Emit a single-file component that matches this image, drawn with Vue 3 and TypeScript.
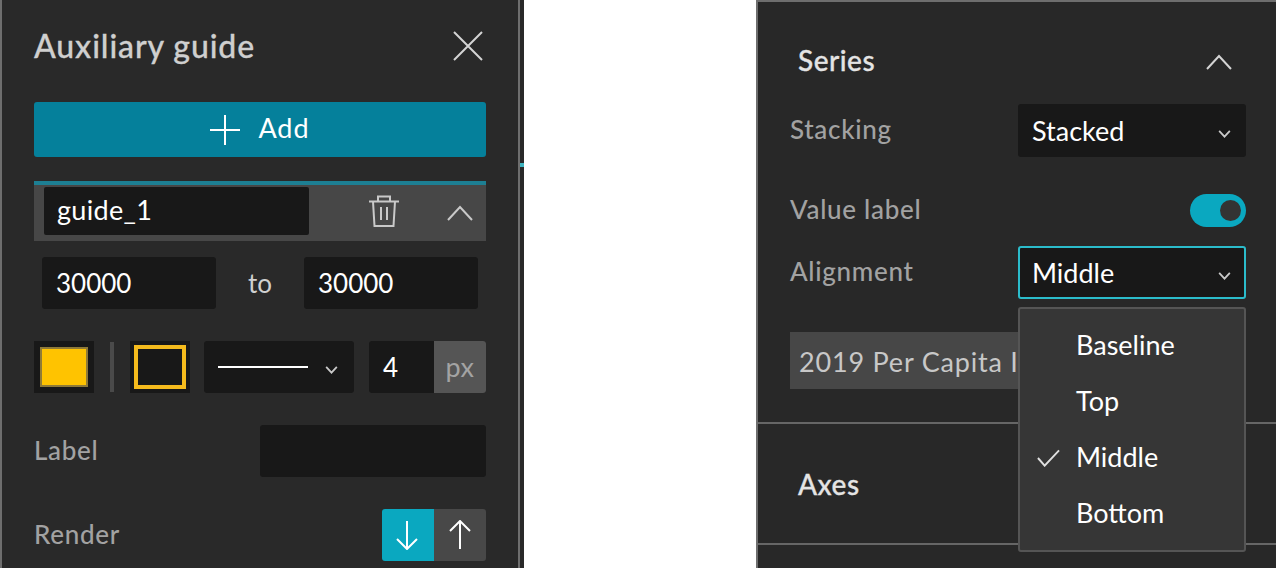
<script setup lang="ts">
const alignOptions = ['Baseline', 'Top', 'Middle', 'Bottom'];
const selected = 'Middle';
</script>

<template>
    <div class="page">
        <section class="guide-panel">
            <header class="guide-head">
                <h2>Auxiliary guide</h2>
                <svg class="close" viewBox="0 0 30 30" width="30" height="30">
                    <path d="M1 1L29 29M29 1L1 29" />
                </svg>
            </header>

            <button class="add-btn">
                <svg viewBox="0 0 30 30" width="30" height="30">
                    <path d="M15 0V30M0 15H30" />
                </svg>
                <span>Add</span>
            </button>

            <div class="guide-row">
                <div class="name-input">guide_1</div>
                <svg class="trash" viewBox="0 0 32 32" width="32" height="32">
                    <path d="M1 6.5H31M10 6.5V1.5H22V6.5M5 6.5L6.5 31H25.5L27 6.5M13 12V25M19 12V25" />
                </svg>
                <svg class="chevron-up" viewBox="0 0 26 16" width="26" height="16">
                    <path d="M1 15L13 2L25 15" />
                </svg>
            </div>

            <div class="range-row">
                <div class="dark-box">30000</div>
                <span class="to">to</span>
                <div class="dark-box">30000</div>
            </div>

            <div class="style-row">
                <div class="swatch"><i class="fill"></i></div>
                <i class="vr"></i>
                <div class="swatch"><i class="stroke"></i></div>
                <div class="line-select">
                    <i class="line"></i>
                    <svg class="caret" viewBox="0 0 14 9" width="13" height="8">
                        <path d="M1 1L7 7.5L13 1" />
                    </svg>
                </div>
                <div class="size-input">
                    <span class="num">4</span>
                    <span class="unit">px</span>
                </div>
            </div>

            <div class="label-row">
                <span class="muted">Label</span>
                <div class="label-input"></div>
            </div>

            <div class="render-row">
                <span class="muted">Render</span>
                <div class="toggle-group">
                    <span class="seg on">
                        <svg viewBox="0 0 22 30" width="22" height="30"><path d="M11 1V29M1 19L11 29L21 19" /></svg>
                    </span>
                    <span class="seg">
                        <svg viewBox="0 0 22 30" width="22" height="30"><path d="M11 29V1M1 11L11 1L21 11" /></svg>
                    </span>
                </div>
            </div>
        </section>

        <div class="splitter"><i></i></div>

        <div class="gap"></div>

        <section class="series-panel">
            <div class="series-body">
                <div class="series-head">
                    <h3>Series</h3>
                    <svg class="chevron-up" viewBox="0 0 26 16" width="26" height="16">
                        <path d="M1 15L13 2L25 15" />
                    </svg>
                </div>
                <div class="field stacking">
                    <span class="muted">Stacking</span>
                    <div class="select">
                        <span>Stacked</span>
                        <svg class="caret" viewBox="0 0 14 9" width="13" height="8"><path d="M1 1L7 7.5L13 1" /></svg>
                    </div>
                </div>
                <div class="field value-label">
                    <span class="muted">Value label</span>
                    <div class="switch"><i></i></div>
                </div>
                <div class="field alignment">
                    <span class="muted">Alignment</span>
                    <div class="select focused">
                        <span>Middle</span>
                        <svg class="caret" viewBox="0 0 14 9" width="13" height="8"><path d="M1 1L7 7.5L13 1" /></svg>
                        <ul class="menu">
                            <li v-for="opt in alignOptions" :key="opt">
                                <svg v-if="opt === selected" class="check" viewBox="0 0 24 18" width="23" height="18">
                                    <path d="M1 9L8 17L23 1" />
                                </svg>
                                <span>{{ opt }}</span>
                            </li>
                        </ul>
                    </div>
                </div>
                <div class="series-tag">2019 Per Capita I</div>
            </div>
            <div class="axes-row"><h3>Axes</h3></div>
        </section>
    </div>
</template>

<style scoped>
.page {
    display: flex;
    width: 1276px;
    height: 568px;
    overflow: hidden;
    background: #fff;
    font-family: Lato, 'Noto Sans', sans-serif;
    color: #fff;
}
h2,
h3 {
    margin: 0;
}
svg {
    fill: none;
    stroke-width: 2;
    flex: none;
}
svg path {
    stroke: currentColor;
}

/* left panel */
.guide-panel {
    width: 520px;
    box-sizing: border-box;
    padding: 0 32px;
    background: #292929;
    border-left: 2px solid #6e6e6e;
    border-right: 2px solid #6e6e6e;
}
.splitter {
    width: 4px;
    padding-top: 163px;
    box-sizing: border-box;
    background: #292929;
}
.splitter i {
    display: block;
    height: 4px;
    background: #3fb4c0;
}
.guide-head {
    display: flex;
    align-items: center;
    justify-content: space-between;
    height: 92px;
    padding-right: 3px;
}
.guide-head h2 {
    margin-bottom: 2px;
    font-size: 32px;
    font-weight: 500;
    letter-spacing: 0.9px;
    color: #cfcfcf;
    -webkit-text-stroke: 0.3px #cfcfcf;
}
.close {
    color: #d4d4d4;
}
.add-btn {
    display: flex;
    align-items: center;
    justify-content: center;
    gap: 18px;
    width: 100%;
    height: 55px;
    margin-top: 10px;
    border: 0;
    border-radius: 3px;
    background: #05809b;
    color: #fff;
    font: inherit;
    font-size: 27px;
    letter-spacing: 1px;
}
.add-btn span {
    margin-bottom: 5px;
}
.guide-row {
    display: flex;
    align-items: center;
    height: 60px;
    margin-top: 24px;
    padding-left: 10px;
    background: #474747;
    border-top: 4px solid #1d7f93;
    box-sizing: border-box;
    color: #c9c9c9;
}
.name-input {
    width: 265px;
    height: 48px;
    line-height: 46px;
    margin-bottom: 4px;
    box-sizing: border-box;
    padding-left: 13px;
    background: #181818;
    border-radius: 2px;
    color: #fff;
    font-size: 27px;
    letter-spacing: 0.3px;
}
.trash {
    margin-left: 59px;
    margin-bottom: 4px;
}
.guide-row .chevron-up {
    margin-left: 47px;
}
.range-row {
    display: flex;
    align-items: center;
    margin-top: 16px;
    padding: 0 8px;
}
.dark-box {
    width: 174px;
    height: 52px;
    line-height: 52px;
    box-sizing: border-box;
    padding-left: 14px;
    background: #181818;
    border-radius: 3px;
    font-size: 26px;
}
.to {
    width: 88px;
    text-align: center;
    font-size: 26px;
    color: #d0d0d0;
}
.style-row {
    display: flex;
    align-items: center;
    margin-top: 32px;
    height: 52px;
}
.swatch {
    display: flex;
    align-items: center;
    justify-content: center;
    width: 60px;
    height: 52px;
    background: #181818;
}
.fill {
    width: 48px;
    height: 40px;
    box-sizing: border-box;
    background: #ffc300;
    border: 2px solid #8f7a38;
}
.vr {
    width: 4px;
    height: 50px;
    margin: 0 16px;
    background: #4a4a4a;
}
.stroke {
    width: 52px;
    height: 44px;
    box-sizing: border-box;
    border: 4px solid #f5bb1d;
}
.line-select {
    display: flex;
    align-items: center;
    width: 150px;
    height: 52px;
    margin-left: 14px;
    padding-left: 14px;
    box-sizing: border-box;
    background: #181818;
    border-radius: 3px;
    color: #c9c9c9;
}
.line {
    width: 90px;
    height: 2px;
    background: #fff;
}
.line-select .caret {
    margin-left: 17px;
    margin-top: 6px;
}
.size-input {
    display: flex;
    width: 117px;
    height: 52px;
    margin-left: 15px;
    background: #181818;
    border-radius: 3px;
    overflow: hidden;
}
.num {
    width: 65px;
    line-height: 52px;
    padding-left: 14px;
    box-sizing: border-box;
    font-size: 26px;
}
.unit {
    width: 52px;
    line-height: 52px;
    text-align: center;
    background: #555;
    color: #a3a3a3;
    font-size: 27px;
    letter-spacing: 0.5px;
}
.label-row,
.render-row {
    display: flex;
    align-items: center;
    justify-content: space-between;
    margin-top: 32px;
}
.muted {
    margin-bottom: 3px;
    line-height: 28px;
    font-size: 26px;
    font-weight: 500;
    letter-spacing: 0.7px;
    color: #a2a2a2;
}
.label-input {
    width: 226px;
    height: 52px;
    background: #181818;
    border-radius: 3px;
}
.toggle-group {
    display: flex;
    border-radius: 3px;
    overflow: hidden;
}
.seg {
    display: flex;
    align-items: center;
    justify-content: center;
    width: 52px;
    height: 52px;
    background: #484848;
    color: #fff;
}
.seg.on {
    box-sizing: border-box;
    padding-right: 2px;
    background: #0aa8c0;
}

/* right panel */
.gap {
    width: 232px;
}
.series-panel {
    flex: 1;
    background: #282828;
    border-left: 2px solid #6e6e6e;
    border-top: 2px solid #6e6e6e;
}
.series-body {
    height: 422px;
    box-sizing: border-box;
    padding: 30px 30px 0 32px;
    border-bottom: 2px solid #666;
}
.series-head {
    display: flex;
    align-items: center;
    justify-content: space-between;
    height: 60px;
    padding: 0 14px 0 8px;
    color: #d4d4d4;
}
.series-head h3 {
    margin-bottom: 4px;
}
.series-head h3,
.axes-row h3 {
    font-size: 28px;
    font-weight: 500;
    letter-spacing: 0.5px;
    color: #e4e4e4;
    -webkit-text-stroke: 0.3px #e4e4e4;
}
.field {
    display: flex;
    align-items: center;
    justify-content: space-between;
}
.stacking {
    margin-top: 12px;
}
.value-label {
    margin-top: 37px;
}
.alignment {
    margin-top: 19px;
}
.select {
    position: relative;
    display: flex;
    align-items: center;
    justify-content: space-between;
    width: 228px;
    height: 53px;
    padding: 0 15px 0 14px;
    box-sizing: border-box;
    background: #181818;
    border-radius: 3px;
    color: #fff;
    font-size: 27px;
}
.select .caret {
    color: #c9c9c9;
    margin-top: 6px;
}
.focused {
    border: 2px solid #2bbccb;
    padding: 0 13px 0 12px;
}
.switch {
    display: flex;
    align-items: center;
    justify-content: flex-end;
    width: 56px;
    height: 33px;
    padding-right: 5px;
    box-sizing: border-box;
    background: #0aa8c0;
    border-radius: 17px;
}
.switch i {
    width: 21px;
    height: 21px;
    border-radius: 50%;
    background: #333;
}
.series-tag {
    width: 300px;
    height: 57px;
    line-height: 59px;
    margin-top: 33px;
    padding-left: 9px;
    box-sizing: border-box;
    background: #474747;
    color: #c8c8c8;
    font-size: 27px;
    letter-spacing: 0.8px;
    white-space: nowrap;
}
.axes-row {
    height: 121px;
    display: flex;
    align-items: center;
    box-sizing: border-box;
    padding-left: 40px;
    border-bottom: 2px solid #666;
}
.menu {
    position: absolute;
    left: -2px;
    top: 59px;
    width: 228px;
    height: 245px;
    margin: 0;
    padding: 8px 0;
    box-sizing: border-box;
    list-style: none;
    background: #363636;
    border: 2px solid #555;
    border-radius: 3px;
    z-index: 2;
}
.menu li {
    position: relative;
    height: 56px;
    line-height: 56px;
    padding-left: 56px;
    font-size: 27px;
}
.check {
    position: absolute;
    left: 17px;
    top: 20px;
    color: #e0e0e0;
}
</style>

<style>
html,
body {
    margin: 0;
    background: #fff;
}
</style>
